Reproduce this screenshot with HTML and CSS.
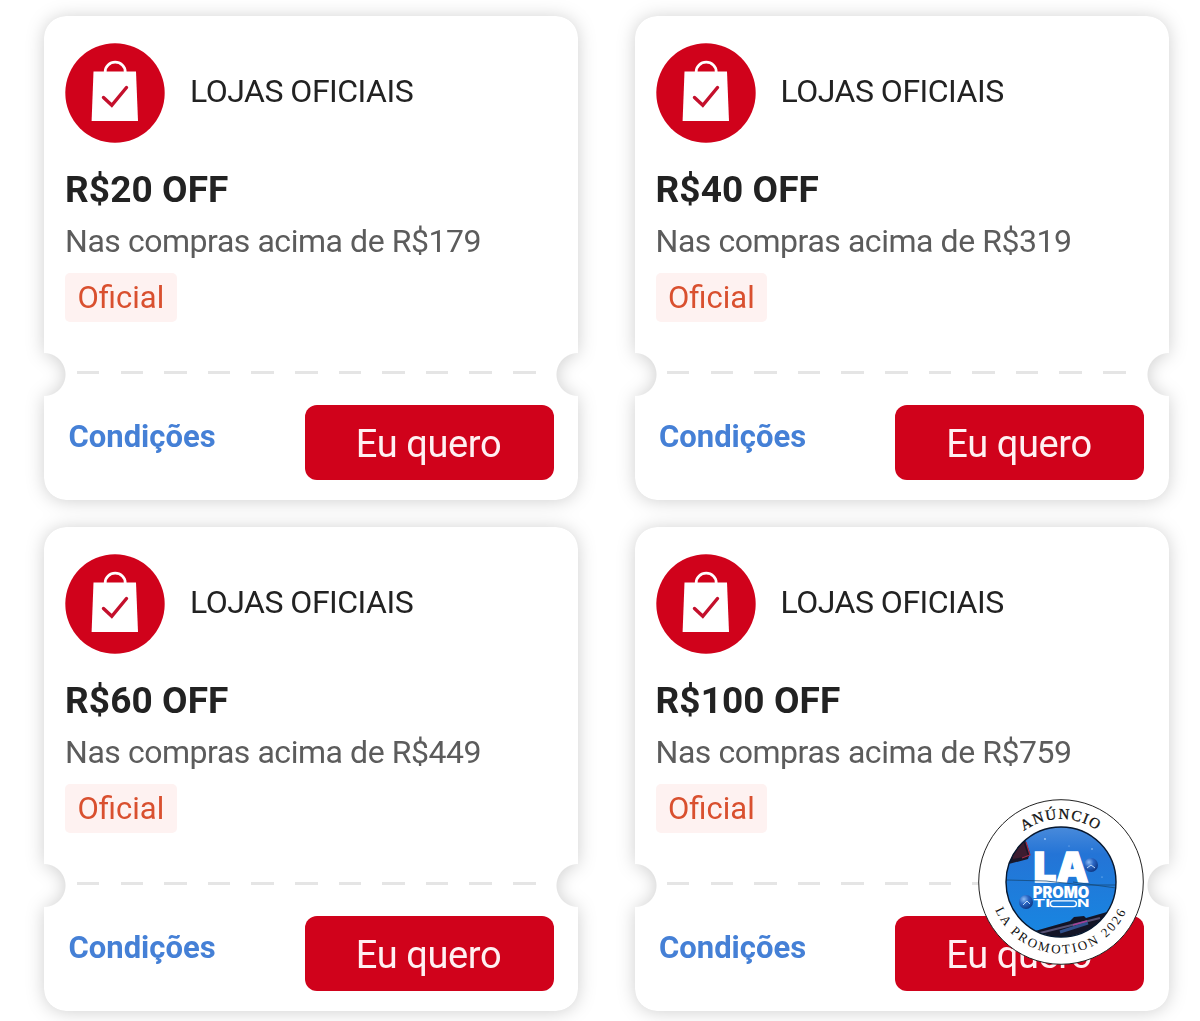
FILE: index.html
```
<!DOCTYPE html>
<html lang="pt-BR">
<head>
    <meta charset="UTF-8">
    <meta name="viewport" content="width=device-width, initial-scale=1.0">
    <title>Cupons - Lojas Oficiais</title>
    <link rel="stylesheet" href="styles.css">
</head>
<body>

<!-- shared bag icon -->
<svg class="defs" width="0" height="0">
    <symbol id="bag" viewBox="0 0 100 100">
        <circle cx="50" cy="50" r="49.7" fill="#d0021b"/>
        <path d="M40.2 30 V28.5 a10 9.3 0 0 1 20 0 V30" fill="none" stroke="#fff" stroke-width="2.8"/>
        <path d="M28.5 28.5 H71 L73 78 H26.6 Z" fill="#fff"/>
        <path d="M38.5 54.5 L46.8 62.3 L61.5 44.5" fill="none" stroke="#c4102c" stroke-width="3.4" stroke-linecap="round"/>
    </symbol>
</svg>

<main class="coupons">
    <article class="coupon">
        <header class="coupon__store">
            <svg class="coupon__icon"><use href="#bag"/></svg>
            <span class="coupon__name">LOJAS OFICIAIS</span>
        </header>
        <h2 class="coupon__title">R$20 OFF</h2>
        <p class="coupon__text">Nas compras acima de R$179</p>
        <span class="coupon__tag">Oficial</span>
        <div class="coupon__line"></div>
        <footer class="coupon__footer">
            <a class="coupon__link" href="#">Condições</a>
            <button class="coupon__button">Eu quero</button>
        </footer>
    </article>

    <article class="coupon">
        <header class="coupon__store">
            <svg class="coupon__icon"><use href="#bag"/></svg>
            <span class="coupon__name">LOJAS OFICIAIS</span>
        </header>
        <h2 class="coupon__title">R$40 OFF</h2>
        <p class="coupon__text">Nas compras acima de R$319</p>
        <span class="coupon__tag">Oficial</span>
        <div class="coupon__line"></div>
        <footer class="coupon__footer">
            <a class="coupon__link" href="#">Condições</a>
            <button class="coupon__button">Eu quero</button>
        </footer>
    </article>

    <article class="coupon">
        <header class="coupon__store">
            <svg class="coupon__icon"><use href="#bag"/></svg>
            <span class="coupon__name">LOJAS OFICIAIS</span>
        </header>
        <h2 class="coupon__title">R$60 OFF</h2>
        <p class="coupon__text">Nas compras acima de R$449</p>
        <span class="coupon__tag">Oficial</span>
        <div class="coupon__line"></div>
        <footer class="coupon__footer">
            <a class="coupon__link" href="#">Condições</a>
            <button class="coupon__button">Eu quero</button>
        </footer>
    </article>

    <article class="coupon">
        <header class="coupon__store">
            <svg class="coupon__icon"><use href="#bag"/></svg>
            <span class="coupon__name">LOJAS OFICIAIS</span>
        </header>
        <h2 class="coupon__title">R$100 OFF</h2>
        <p class="coupon__text">Nas compras acima de R$759</p>
        <span class="coupon__tag">Oficial</span>
        <div class="coupon__line"></div>
        <footer class="coupon__footer">
            <a class="coupon__link" href="#">Condições</a>
            <button class="coupon__button">Eu quero</button>
        </footer>
    </article>
</main>

<!-- round stamp over the last coupon -->
<svg class="stamp" viewBox="0 0 166 166">
    <defs>
        <linearGradient id="sky" x1="0" y1="0" x2="0" y2="1">
            <stop offset="0" stop-color="#4a8bdb"/>
            <stop offset=".25" stop-color="#2474d6"/>
            <stop offset="1" stop-color="#1787e2"/>
        </linearGradient>
        <radialGradient id="ball" cx=".35" cy=".3" r=".75">
            <stop offset="0" stop-color="#8dbcf5"/>
            <stop offset=".45" stop-color="#2a66c4"/>
            <stop offset="1" stop-color="#0d3581"/>
        </radialGradient>
        <clipPath id="disc"><circle cx="83" cy="83" r="55"/></clipPath>
        <path id="arc-top" d="M20 83 A63 63 0 0 1 146 83"/>
        <path id="arc-bottom" d="M11.5 83 A71.5 71.5 0 0 0 154.5 83"/>
    </defs>
    <circle cx="83" cy="83" r="82.3" fill="#fff" stroke="#222" stroke-width="1"/>
    <g clip-path="url(#disc)">
        <rect x="27" y="27" width="112" height="112" fill="url(#sky)"/>
        <path d="M27 48 L46 38 L52 54 L50 60 L27 66 Z" fill="#19172b"/>
        <path d="M34 50 L45 42 L50 57 L35 60 Z" fill="#3d1c30"/>
        <path d="M48 43 L52 56 L44 59" fill="none" stroke="#a52b46" stroke-width="1.2"/>
        <path d="M50 134 L92 122 L96 118 L106 117 L108 119 L136 111 V140 H60 Z" fill="#131426"/>
        <path d="M62 134 L122 119" stroke="#565174" stroke-width="2"/>
        <path d="M82 133 L110 124" stroke="#30508d" stroke-width="3"/>
        <path d="M95 126 L109 122" stroke="#a64099" stroke-width="1.5"/>
        <circle cx="113" cy="66" r="7" fill="url(#ball)"/>
        <circle cx="48" cy="103" r="7" fill="url(#ball)"/>
        <path d="M109 69 l4 -3 l4 3 M45 106 l4 -4 l3 3" fill="none" stroke="#bdd9f7" stroke-width="1"/>
        <circle cx="67" cy="40" r=".9" fill="#a9d0f8"/>
        <circle cx="114" cy="50" r=".8" fill="#a9d0f8"/>
        <circle cx="91" cy="47" r=".5" fill="#a9d0f8"/>
        <circle cx="124" cy="78" r=".6" fill="#a9d0f8"/>
    </g>
    <g class="stamp__logo">
        <text x="55.5" y="83.2" font-size="41" textLength="55" lengthAdjust="spacingAndGlyphs" stroke-width="1.4">LA</text>
        <text x="54.8" y="98.8" font-size="15.5" textLength="56.5" lengthAdjust="spacingAndGlyphs">PROMO</text>
        <text class="stamp__wide" x="55" y="108.3" font-size="10" textLength="17.5" lengthAdjust="spacingAndGlyphs">TI</text>
        <rect x="72.4" y="101.9" width="26" height="5.7" rx="2.8" fill="none" stroke="#fff" stroke-width="1.4"/>
        <text class="stamp__wide" x="99" y="108.3" font-size="10" textLength="12.5" lengthAdjust="spacingAndGlyphs">N</text>
    </g>
    <path d="M28 81 L68 82 L105 86 H138 M95 83 L138 89" fill="none" stroke="#174a79" stroke-width=".8"/>
    <circle cx="83" cy="83" r="55" fill="none" stroke="#07172e" stroke-width="1.4"/>
    <text class="stamp__top"><textPath href="#arc-top" startOffset="50%" text-anchor="middle">ANÚNCIO</textPath></text>
    <text class="stamp__bottom"><textPath href="#arc-bottom" startOffset="50%" text-anchor="middle">LA PROMOTION 2026</textPath></text>
</svg>

</body>
</html>
```
FILE: styles.css
```
*,
*::before,
*::after {
  box-sizing: border-box;
}

body {
  margin: 0;
  width: 1200px;
  height: 1021px;
  overflow: hidden;
  position: relative;
  font-family: Roboto, sans-serif;
  color: #222;
  background: #fff;
}

.defs {
  position: absolute;
}

/* the shadow sits on the grid so it also follows the notches */
.coupons {
  display: grid;
  grid-template-columns: 534px 534px;
  column-gap: 56.5px;
  row-gap: 26.5px;
  padding: 15.5px 0 0 44px;
  height: 1060px;
  align-content: start;
  filter: drop-shadow(0 1px 9px rgba(0, 0, 0, 0.19));
}

.coupon {
  height: 484.5px;
  padding: 27px 24.5px 0 21px;
  display: flex;
  flex-direction: column;
  align-items: flex-start;
  border-radius: 22px;
  background: #fff;
  -webkit-mask:
    radial-gradient(circle 21.5px at 0 358.5px, transparent 21px, #000 22px) left / 51% 100% no-repeat,
    radial-gradient(circle 21.5px at 100% 358.5px, transparent 21px, #000 22px) right / 50% 100% no-repeat;
  mask:
    radial-gradient(circle 21.5px at 0 358.5px, transparent 21px, #000 22px) left / 51% 100% no-repeat,
    radial-gradient(circle 21.5px at 100% 358.5px, transparent 21px, #000 22px) right / 50% 100% no-repeat;
}

.coupon__store {
  display: flex;
  align-items: center;
  gap: 25px;
  height: 100px;
}

.coupon__icon {
  width: 100px;
  height: 100px;
}

.coupon__name {
  padding-bottom: 3px;
  font-size: 32px;
  line-height: 38px;
  letter-spacing: -0.5px;
}

.coupon__title {
  margin: 25px 0 0;
  font-size: 37px;
  font-weight: 700;
  line-height: 44px;
  letter-spacing: 0.1px;
}

.coupon__text {
  margin: 10px 0 0;
  font-size: 32px;
  line-height: 38px;
  letter-spacing: -0.45px;
  color: #5c5c5c;
}

.coupon__tag {
  margin-top: 13px;
  height: 49px;
  padding: 0 12.5px;
  border-radius: 5px;
  font-size: 31px;
  line-height: 49px;
  color: #d9502f;
  background: #fef2f1;
}

.coupon__line {
  width: 460px;
  height: 3px;
  margin: 49px 0 0 11.5px;
  background: repeating-linear-gradient(to right, #e5e5e5 0 22.5px, transparent 22.5px 43.6px);
}

.coupon__footer {
  width: 100%;
  display: flex;
  justify-content: space-between;
  align-items: flex-start;
  margin-top: 31.5px;
  padding-left: 3.5px;
}

.coupon__link {
  margin-top: 12.5px;
  font-size: 31px;
  font-weight: 700;
  line-height: 38px;
  color: #4580d6;
  text-decoration: none;
}

.coupon__button {
  width: 249px;
  height: 75px;
  padding: 2px 1px 0 0;
  border: 0;
  border-radius: 12px;
  font-family: inherit;
  font-size: 38px;
  letter-spacing: -0.4px;
  color: #fff0f2;
  background: #d0021b;
  cursor: pointer;
}

.stamp {
  position: absolute;
  left: 978px;
  top: 799px;
  width: 166px;
  height: 166px;
}

.stamp__logo {
  font-family: Inter, sans-serif;
  font-weight: 900;
  fill: #fff;
  stroke: #fff;
  stroke-width: 0;
}

.stamp__wide {
  font-weight: 700;
}

.stamp__top,
.stamp__bottom {
  font-family: "Liberation Serif", serif;
  fill: #111;
}

.stamp__top {
  font-size: 15px;
  letter-spacing: 1.4px;
  stroke: #111;
  stroke-width: 0.3px;
}

.stamp__bottom {
  font-size: 13px;
  letter-spacing: 2.4px;
}
```
